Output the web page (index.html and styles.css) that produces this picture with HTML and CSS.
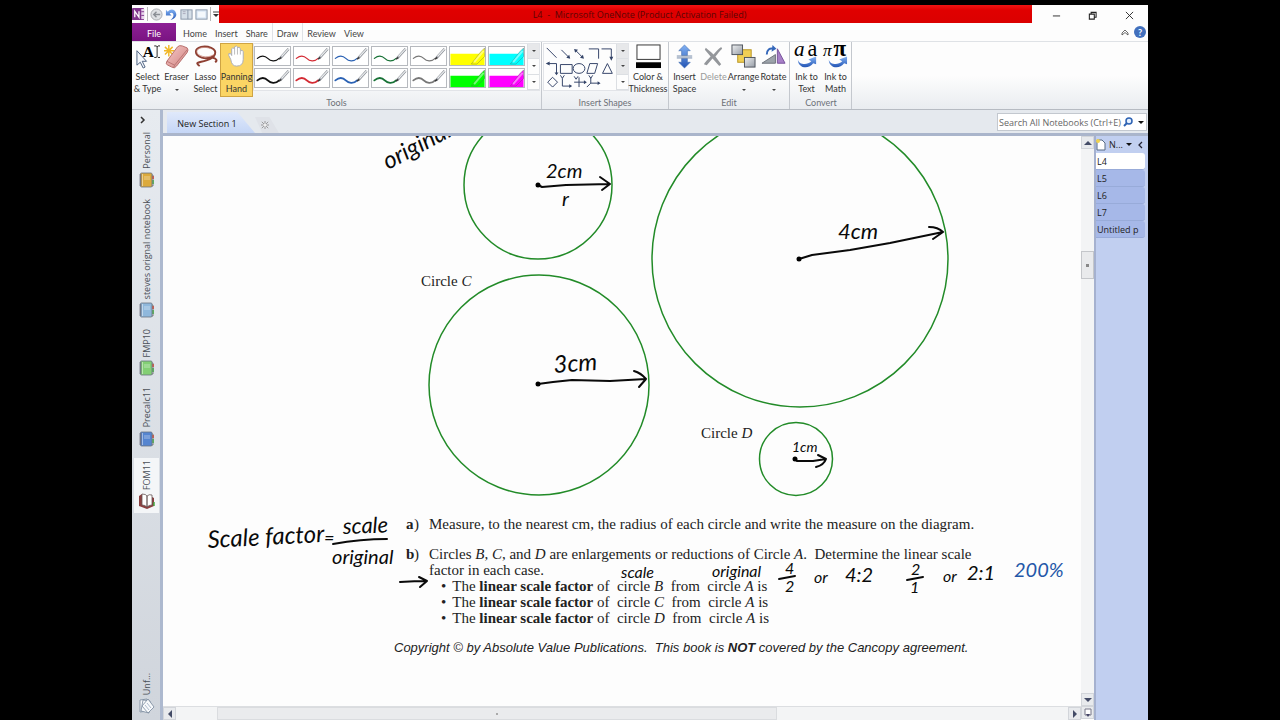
FILE: index.html
```html
<!DOCTYPE html>
<html lang="en">
<head>
<meta charset="utf-8">
<title>L4 - Microsoft OneNote (Product Activation Failed)</title>
<link rel="stylesheet" href="styles.css">
</head>
<body>
<svg class="defs" aria-hidden="true">
  <defs>
    <symbol id="pen" viewBox="0 0 36 19"><path d="M2 12C7 8 10 9 13 12S21 16 25 12" fill="none" stroke="currentColor" stroke-width="var(--w)" stroke-linecap="round"/><path d="M26 12L35 2" stroke="#8b8f96" stroke-width="2.6"/><path d="M27.500 10L35 2" stroke="#eceef0" stroke-width="1.300"/><path d="M25 13l2-2" stroke="#333" stroke-width="1.500"/></symbol>
    <symbol id="marker" viewBox="0 0 36 19"><path d="M0 7H36V19H0z" fill="currentColor"/><path d="M22 18L32 5 36 1V10L28 18z" fill="currentColor" stroke="#555" stroke-opacity=".35"/><path d="M25 16L35 4" stroke="#fff" stroke-opacity=".45" stroke-width="2"/></symbol>
    <symbol id="book" viewBox="0 0 16 16"><path d="M12 3h2v11h-2z" fill="#eee" stroke="#555" stroke-width=".7"/><path d="M14 4v3" stroke="#c43" stroke-width="1.500"/><path d="M14 8v4" stroke="#4a4" stroke-width="1.500"/><rect x="1.500" y="1" width="11.500" height="14" rx="1" fill="currentColor" stroke="#6b7380" stroke-width=".8"/><path d="M5 5h6M5 7h6M3.500 2v12" stroke="#fff" stroke-opacity=".45"/><path d="M0 3h3M0 5h3M0 7h3M0 9h3M0 11h3M0 13h3" stroke="#667" stroke-width=".7"/></symbol>
    <linearGradient id="blue" x2="0" y2="1"><stop stop-color="#82b2f3"/><stop offset="1" stop-color="#2455b5"/></linearGradient>
    <linearGradient id="pink" x2="1" y2="1"><stop stop-color="#f7cbc9"/><stop offset="1" stop-color="#cf817f"/></linearGradient>
    <linearGradient id="grey" x2="1" y2="1"><stop stop-color="#eef0f2"/><stop offset="1" stop-color="#969ca5"/></linearGradient>
  </defs>
</svg>

<div class="window">
  <header class="titlebar">
    <div class="quick">
      <svg class="applogo" viewBox="0 0 14 14" role="img" aria-label="OneNote"><rect width="13" height="13" rx="1" fill="#80348c"/><rect x="10" y="1" width="3" height="11" fill="#e7d4ea"/><path d="M3 10V3.500L7.500 10V3.500" fill="none" stroke="#fff" stroke-width="1.400"/><path d="M10 4h3M10 8h3" stroke="#80348c"/></svg>
      <i class="bar"></i>
      <button aria-label="Back"><svg viewBox="0 0 14 14"><circle cx="7" cy="7" r="6" fill="#dfe1e4" stroke="#a6a9ad"/><path d="M11 7H4M7 4L4 7l3 3" fill="none" stroke="#8b8f95" stroke-width="1.500"/></svg></button>
      <button aria-label="Undo"><svg viewBox="0 0 14 14"><path d="M1 2v6h6L5 6c2-2 5 0 4 3-.5 2-2 3-3 4 4-1 7-4 6-7C11 1 6 0 3 4z" fill="url(#blue)"/></svg></button>
      <button aria-label="Dock to desktop"><svg viewBox="0 0 14 14"><rect x="1" y="2" width="12" height="10" fill="#d6dfe8" stroke="#8694a6"/><rect x="8" y="2" width="1" height="10" fill="#8694a6"/><path d="M3 4h3M3 6h3" stroke="#aab"/></svg></button>
      <button aria-label="Full page view"><svg viewBox="0 0 14 14"><rect x="1" y="2" width="12" height="10" fill="#dbe7f5" stroke="#8694a6"/><rect x="3" y="4" width="8" height="6" fill="#f4f8fc"/></svg></button>
      <i class="bar"></i>
      <button class="small" aria-label="Customize toolbar"><svg viewBox="0 0 6 8"><path d="M0 2h6" stroke="#444"/><path d="M0 4h6L3 7z" fill="#333"/></svg></button>
    </div>
    <h1>L4 &nbsp;-&nbsp; Microsoft OneNote (Product Activation Failed)</h1>
    <div class="winbuttons">
      <button aria-label="Minimize"><svg viewBox="0 0 10 10"><path d="M1 5.500h8" stroke="#222"/></svg></button>
      <button aria-label="Restore"><svg viewBox="0 0 10 10"><path d="M1.500 3.500h5.500V9H1.500zM3.500 3V1.500H9V7H7.500" fill="none" stroke="#222" stroke-width="1.200"/></svg></button>
      <button aria-label="Close"><svg viewBox="0 0 10 10"><path d="M1 1l8 8M9 1L1 9" stroke="#222"/></svg></button>
    </div>
  </header>

  <nav class="tabs">
    <button class="file">File</button><button>Home</button><button>Insert</button><button>Share</button><button class="on">Draw</button><button>Review</button><button>View</button>
    <div class="help">
      <button aria-label="Collapse ribbon"><svg viewBox="0 0 8 8"><path d="M1 5l3-3 3 3v2L4 4.500 1 7z" fill="#fff" stroke="#444" stroke-width=".8"/></svg></button>
      <button class="q" aria-label="Help">?</button>
    </div>
  </nav>

  <section class="ribbon">
    <div class="group">
      <div class="tools">
        <button class="tool"><svg viewBox="0 0 26 26"><text x="8" y="13" class="serifA">A</text><path d="M20 2h2l1 1 1-1h2M23 3v10M20 14h2l1-1 1 1h2" fill="none" stroke="#222"/><path d="M2 7V22l3.500-3 3 6 2-1-3-6H12z" fill="#f5f8fd" stroke="#4b607f"/></svg><span>Select<br>&amp; Type</span></button>
        <button class="tool"><svg viewBox="0 0 26 26"><path d="M5 1v12M0 7h11M1 3l8 8M9 3l-8 8" stroke="#f0b728" stroke-width="1.500"/><path d="M3 18L14 3Q16 1 19 2L24 4Q26 6 24 9L13 23Q11 26 8 24L4 22Q1 21 3 18z" fill="url(#pink)" stroke="#b66d6b"/><path d="M3 18l8 4L24 6M11 22l-1 3" fill="none" stroke="#b97574"/></svg><span>Eraser<br><b class="dd"></b></span></button>
        <button class="tool"><svg viewBox="0 0 26 26"><path d="M22 12C13 18 3 13 3 8S12 1 19 4s5 10-5 13S2 19 7 23M20 14q7 2 3 5" fill="none" stroke="#8e3f32" stroke-width="2"/><path d="M22 11C14 16 4 12 4 8S12 2 19 5" fill="none" stroke="#c8877a" stroke-width=".8"/></svg><span>Lasso<br>Select</span></button>
        <button class="tool pressed"><svg viewBox="0 0 26 26"><path d="M7 16L5 12Q4 9 7 10l1 2V5q1-2 3 0V3q2-2 3 0v1q2-2 3 1v2q3-1 3 1v8q0 7-7 7-5 0-6-7z" fill="#fff" stroke="#a9adb8"/><path d="M11 5v6M14 4v7M17 7v4" stroke="#bbb"/></svg><span>Panning<br>Hand</span></button>
        <div class="gallery">
          <div class="pens">
            <button class="c-black"><svg><use href="#pen"/></svg></button><button class="c-red"><svg><use href="#pen"/></svg></button><button class="c-blue"><svg><use href="#pen"/></svg></button><button class="c-green"><svg><use href="#pen"/></svg></button><button class="c-grey"><svg><use href="#pen"/></svg></button><button class="c-yellow"><svg><use href="#marker"/></svg></button><button class="c-cyan"><svg><use href="#marker"/></svg></button>
            <button class="c-black thick"><svg><use href="#pen"/></svg></button><button class="c-red thick"><svg><use href="#pen"/></svg></button><button class="c-blue thick"><svg><use href="#pen"/></svg></button><button class="c-green thick"><svg><use href="#pen"/></svg></button><button class="c-grey thick"><svg><use href="#pen"/></svg></button><button class="c-lime"><svg><use href="#marker"/></svg></button><button class="c-magenta"><svg><use href="#marker"/></svg></button>
          </div>
          <div class="spin"><button class="off" aria-label="Up"><b class="dd"></b></button><button aria-label="Down"><b class="dd"></b></button><button aria-label="More"><b class="dd"></b></button></div>
        </div>
      </div>
      <h2>Tools</h2>
    </div>
    <div class="group">
      <div class="tools">
        <div class="gallery shapes">
          <svg viewBox="0 0 72 47" role="img" aria-label="Shapes"><g fill="none" stroke="#344468"><path d="M2 4l10 10M17 6l8 8M31 6l8 8M45 5h10v10M58 5h10v10M4 20h8v10M16 21h12v9H16z"/><ellipse cx="35" cy="25" rx="6" ry="5"/><path d="M46 20h8l-3 10h-8zM64 20l-5 10h10zM8 34l5 5-5 5-5-5zM18 35v8h8M16 32l2 3 2-3M30 39h11M35 34v10M30 33l2 3 2-3M47 34v6h8M47 40l-4 4M45 32l2 3 2-3"/></g><path d="M26 15l-4-1 3-3zM40 15l-4-1 3-3zM30 5l4 1-3 3zM68 17l-2-4h4zM1 20l4-2v4zM12 32l-2-3h4zM28 43l-3-2v4zM43 39l-3-2v4zM57 40l-3-2v4z" fill="#344468"/></svg>
          <div class="spin"><button class="off" aria-label="Up"><b class="dd"></b></button><button class="off" aria-label="Down"><b class="dd"></b></button><button aria-label="More"><b class="dd"></b></button></div>
        </div>
        <button class="tool wide"><svg viewBox="0 0 26 26"><rect x="1" y="1" width="24" height="15" fill="#fff" stroke="#333"/><path d="M0 19h26v6H0z"/></svg><span>Color &amp;<br>Thickness</span></button>
      </div>
      <h2>Insert Shapes</h2>
    </div>
    <div class="group">
      <div class="tools">
        <button class="tool"><svg viewBox="0 0 26 26"><path d="M13 1l6 6h-3v5h-6V7H7zM13 25l6-6h-3v-4h-6v4H7z" fill="url(#blue)" stroke="#3c69ae" stroke-width=".6"/><path d="M5 12.500h16M5 14.500h16" stroke="#7288a8"/></svg><span>Insert<br>Space</span></button>
        <button class="tool disabled"><svg viewBox="0 0 26 26"><path d="M5 4c3 3 5 4 8 7 3-4 5-6 8-8l1 2c-4 4-5 6-7 8l6 8-2 2-7-8-6 7-3-1c3-4 4-5 7-8L4 6z" fill="#94979b"/></svg><span>Delete<br>&nbsp;</span></button>
        <button class="tool arrange"><svg viewBox="0 0 26 26"><rect x="7" y="6" width="14" height="13" fill="#f0cf55" stroke="#b99524"/><rect x="1" y="1" width="11" height="10" fill="url(#grey)" stroke="#4f555e"/><rect x="14" y="14" width="11" height="10" fill="url(#grey)" stroke="#4f555e"/></svg><span>Arrange<br><b class="dd"></b></span></button>
        <button class="tool"><svg viewBox="0 0 26 26"><path d="M1 20L15 11v9z" fill="#9ca3aa" stroke="#6d737b"/><path d="M17 5l8 15h-8z" fill="#a77fc7" stroke="#76509a"/><path d="M6 11C6 6 9 4 13 5" fill="none" stroke="#3467ba" stroke-width="2"/><path d="M12 1l4 4-5 3z" fill="#3467ba"/></svg><span>Rotate<br><b class="dd"></b></span></button>
      </div>
      <h2>Edit</h2>
    </div>
    <div class="group convert">
      <div class="tools">
        <button class="tool"><svg viewBox="0 0 26 26"><text x="0" y="12" class="ink-a">a</text><text x="14" y="12" class="plain-a">a</text><path d="M4 16c1 5 9 7 14 2l-3-2 8-3v8l-3-1C15 27 4 25 4 16z" fill="url(#blue)"/></svg><span>Ink to<br>Text</span></button>
        <button class="tool"><svg viewBox="0 0 26 26"><text x="0" y="12" class="ink-pi">π</text><text x="11" y="12" class="plain-pi">π</text><path d="M6 16c1 5 9 7 14 2l-3-2 8-3v8l-3-1C17 27 6 25 6 16z" fill="url(#blue)"/></svg><span>Ink to<br>Math</span></button>
      </div>
      <h2>Convert</h2>
    </div>
  </section>

  <main class="body">
    <aside class="notebooks">
      <button class="expand" aria-label="Expand"><svg viewBox="0 0 6 8"><path d="M1 1l3 3-3 3" fill="none" stroke="#333" stroke-width="1.500"/></svg></button>
      <button class="nb c-gold"><span>Personal</span><svg><use href="#book"/></svg></button>
      <button class="nb c-sky"><span>steves orignal notebook</span><svg><use href="#book"/></svg></button>
      <button class="nb c-leaf"><span>FMP10</span><svg><use href="#book"/></svg></button>
      <button class="nb c-royal"><span>Precalc11</span><svg><use href="#book"/></svg></button>
      <button class="nb current"><span>FOM11</span><svg viewBox="0 0 16 16"><path d="M0 3l3-2v10l5 2 5-2V4l2 1v8l-7 3-8-3z" fill="#8a3f3f"/><path d="M3 1q4 0 5 2v11q-2-2-5-2zM8 3q2-2 5-1v10q-3 0-5 2z" fill="#fff" stroke="#655" stroke-width=".8"/><path d="M15 9v4" stroke="#4a4" stroke-width="1.500"/></svg></button>
      <button class="nb unfiled"><span>Unf...</span><svg viewBox="0 0 16 16"><g fill="#f7f9fb" stroke="#76879b" stroke-width=".8"><path d="M1 2l7-1 1 12-8 1z"/><path d="M4 2l7 1-1 12-8-2z"/><path d="M9 1l6 8-6 6-6-7z"/></g><path d="M8 5l4 5M6 7l4 5" stroke="#9aabc0" stroke-width=".8"/></svg></button>
    </aside>

    <div class="workspace">
      <div class="sections">
        <button class="section">New Section 1</button>
        <button class="newsection" aria-label="Create new section"><svg viewBox="0 0 10 10"><path d="M5 0v10M0 5h10M1 1l8 8M9 1L1 9" stroke="#888"/><circle cx="5" cy="5" r="2" fill="#eee"/></svg></button>
        <label class="search"><input type="text" aria-label="Search notebooks" placeholder="Search All Notebooks (Ctrl+E)"><svg class="lens" viewBox="0 0 10 10"><circle cx="6" cy="4" r="3" fill="#e5f1ff" stroke="#2d62b3" stroke-width="1.500"/><path d="M4 6L1 9" stroke="#2d62b3" stroke-width="2"/></svg><i class="tri"></i></label>
      </div>
      <div class="content">
        <div class="canvas">
          <article class="page">
            <svg class="circles" viewBox="163 136 918 380" role="img" aria-label="Circles with labelled radii">
              <g fill="none" stroke="#228b28" stroke-width="1.500"><circle cx="538" cy="185" r="74"/><circle cx="539" cy="385" r="110"/><circle cx="800" cy="259" r="148"/><circle cx="796" cy="459" r="36.500"/></g>
              <text x="421" y="286">Circle <tspan class="it">C</tspan></text>
              <text x="701" y="438">Circle <tspan class="it">D</tspan></text>
            </svg>
            <div class="q-row"><b>a</b>)<p>Measure, to the nearest cm, the radius of each circle and write the measure on the diagram.</p></div>
            <div class="q-row"><b>b</b>)<div><p>Circles <i>B</i>, <i>C</i>, and <i>D</i> are enlargements or reductions of Circle <i>A</i>.&nbsp; Determine the linear scale<br>factor in each case.</p>
              <ul>
                <li>The <b>linear scale factor</b> of &nbsp;circle <i>B</i>&nbsp; from &nbsp;circle <i>A</i> is</li>
                <li>The <b>linear scale factor</b> of &nbsp;circle <i>C</i>&nbsp; from &nbsp;circle <i>A</i> is</li>
                <li>The <b>linear scale factor</b> of &nbsp;circle <i>D</i>&nbsp; from &nbsp;circle <i>A</i> is</li>
              </ul></div></div>
            <footer>Copyright © by Absolute Value Publications.&nbsp; This book is <b>NOT</b> covered by the Cancopy agreement.</footer>
            <svg class="ink" viewBox="163 136 918 570">
              <g class="strokes">
                <path d="M538 185L542 187 566 185 610 184M600 177L610 184 602 190"/>
                <path d="M538 384L553 382 572 380 610 381 646 379M634 371Q641 373 646 379L639 387"/>
                <path d="M799 259L812 255 850 250 890 243 943 232M929 227Q938 227 943 232L933 239"/>
                <path d="M795 459L797 461 813 461 826 459M818 455L826 459Q824 465 816 467"/>
                <path d="M333 544Q361 539 387 539M400 582Q415 581 427 581M419 577L427 581 420 587"/>
                <path d="M779 579L795 576M907 580L923 577"/>
              </g>
              <g><circle cx="538" cy="185" r="2.500"/><circle cx="538" cy="384" r="2.500"/><circle cx="799" cy="259" r="2.500"/><circle cx="795" cy="459" r="2.500"/></g>
              <g class="hand">
                <text class="h24" transform="rotate(-28 388 170)" x="388" y="170">original</text>
                <text class="h20" x="546" y="178">2cm</text><text class="h20" x="562" y="206">r</text>
                <text class="h24" transform="rotate(-4 554 373)" x="554" y="373">3cm</text>
                <text class="h22" x="838" y="239">4cm</text>
                <text class="h14" x="792" y="452">1cm</text>
                <text class="h24" transform="rotate(-3 208 548)" x="208" y="548">Scale factor</text><text class="h18" x="324" y="544">=</text>
                <text class="h22" transform="rotate(-2 343 534)" x="343" y="534">scale</text>
                <text class="h20" x="332" y="564">original</text>
                <text class="h16" x="621" y="578">scale</text><text class="h16" x="712" y="577">original</text>
                <text class="h16" x="785" y="574">4</text><text class="h16" x="785" y="592">2</text>
                <text class="h16" x="814" y="583">or</text><text class="h20" x="845" y="582">4:2</text>
                <text class="h16" x="911" y="575">2</text><text class="h16" x="910" y="593">1</text>
                <text class="h16" x="943" y="582">or</text><text class="h20" x="967" y="580">2:1</text>
                <text class="h20 bluepen" x="1014" y="577">200%</text>
              </g>
            </svg>
          </article>
          <div class="vscroll"><button aria-label="Scroll up"><svg viewBox="0 0 8 8"><path d="M0 6l4-4 4 4z"/></svg></button><i class="thumb"></i><button aria-label="Scroll down"><svg viewBox="0 0 8 8"><path d="M0 2h8L4 6z"/></svg></button></div>
          <div class="hscroll"><button aria-label="Scroll left"><svg viewBox="0 0 8 8"><path d="M6 0v8L2 4z"/></svg></button><i class="thumb"></i><button aria-label="Scroll right"><svg viewBox="0 0 8 8"><path d="M2 0v8l4-4z"/></svg></button></div>
          <button class="corner" aria-label="Add space"><svg viewBox="0 0 10 10"><path d="M2 1h6v6H2z" fill="#fff" stroke="#778"/><path d="M3 6h4L5 9z" fill="#446"/></svg></button>
        </div>
        <aside class="pages">
          <div class="pagehead"><svg viewBox="0 0 10 12"><path d="M1 1h5l3 3v7H1z" fill="#fff" stroke="#566b85"/><circle cx="2" cy="2" r="2" fill="#f1d34c"/></svg><span>N...</span><i class="tri"></i><button aria-label="Collapse"><svg viewBox="0 0 6 8"><path d="M4 1L1 4l3 3" fill="none" stroke="#223" stroke-width="1.300"/></svg></button></div>
          <button class="active">L4</button><button>L5</button><button>L6</button><button>L7</button><button>Untitled p</button>
        </aside>
      </div>
    </div>
  </main>
</div>
</body>
</html>
```
FILE: styles.css
```css
* { box-sizing: border-box; }
body { margin: 0; background: #000; font-family: "Open Sans", "Noto Sans", sans-serif; font-size: 9px; color: #333; }
.defs { position: absolute; width: 0; height: 0; }
button { font: inherit; color: inherit; background: none; border: 0; padding: 0; margin: 0; display: flex; align-items: center; justify-content: center; }
svg { display: block; }
h1, h2, p, ul { margin: 0; padding: 0; font-weight: 400; }
.window { height: 100vh; margin: 0 132px; padding-top: 5px; display: flex; flex-direction: column; overflow: hidden; }

.titlebar { display: flex; height: 18px; background: #fdfdfd; flex: none; }
.quick { width: 87px; display: flex; align-items: center; gap: 2px; }
.quick svg { width: 13px; height: 13px; }
.quick .bar { width: 1px; height: 14px; background: #b8b8b8; }
.quick .small svg { width: 6px; height: 8px; }
.titlebar h1 { flex: 1; background: linear-gradient(#f01414, #e00000 30%, #db0000); color: #5c0505; font-size: 9px; line-height: 19px; text-align: center; padding-left: 28px; }
.winbuttons { width: 116px; display: flex; justify-content: space-around; padding: 2px 0 0 6px; }
.winbuttons svg { width: 9px; height: 9px; }

.tabs { display: flex; height: 19px; background: #fdfdfd; border-bottom: 1px solid #dfe2e6; flex: none; color: #444; font-family: Lato, sans-serif; }
.tabs > button { padding: 2px 4px 0; }
.tabs .file { width: 44px; background: linear-gradient(#8d2095, #7a1482); color: #fff; margin-right: 3px; }
.tabs .on { border: 1px solid #dfe2e6; border-width: 0 1px; }
.help { margin-left: auto; display: flex; gap: 5px; align-items: center; padding-right: 2px; }
.help svg { width: 8px; height: 8px; }
.q { width: 12px; height: 12px; border-radius: 50%; background: #4270bd; color: #fff; font-weight: 700; }

.ribbon { display: flex; height: 68px; flex: none; background: linear-gradient(#fdfdfd 50%, #e9ecf0); border-bottom: 1px solid #b6bbc2; font-family: Lato, sans-serif; }
.group { border-right: 1px solid #c4c8ce; display: flex; flex-direction: column; justify-content: space-between; padding: 1px 1px 0 1px; }
.group h2 { text-align: center; color: #6d7178; line-height: 12px; font-size: 9px; }
.convert { padding: 1px 1px 0 2px; }
.tools { display: flex; }
.tool { width: 29px; height: 54px; flex-direction: column; justify-content: flex-start; line-height: 12px; border: 1px solid transparent; white-space: nowrap; }
.tool svg { width: 25px; height: 25px; margin-bottom: 2px; flex: none; overflow: visible; }
.tool.pressed { width: 33px; background: #fbd564; border-color: #cfa443; }
.tool.wide { width: 38px; }
.tool.arrange { width: 31px; }
.tool.disabled { color: #9a9a9a; }
.dd { display: inline-block; vertical-align: middle; border: 2px solid transparent; border-top-color: #444; border-bottom: 0; }
.gallery { display: flex; height: 48px; border: 1px solid #e2e4e8; background: #fdfdfd; }
.pens { display: grid; grid-template-columns: repeat(7, 37px); gap: 2px; padding: 2px 2px 2px 0; }
.pens button { --w: 1.3; border: 1px solid #b6b9be; background: #fff; height: 20px; }
.pens svg { width: 35px; height: 18px; }
.pens .thick { --w: 2; }
.c-black { color: #111; } .c-red { color: #d42a33; } .c-blue { color: #2b62b4; } .c-green { color: #187236; } .c-grey { color: #777; }
.c-yellow { color: #ff0; } .c-cyan { color: #0ff; } .c-lime { color: #0f0; } .c-magenta { color: #f0f; }
.spin { display: flex; flex-direction: column; width: 12px; border-left: 1px solid #dcdfe3; }
.spin button { flex: 1; border-bottom: 1px solid #dcdfe3; }
.spin .off { background: #e7e8ea; }
.shapes > svg { width: 72px; height: 46px; }
.serifA { font: 700 16px "Liberation Serif", serif; }
.ink-a { font: italic 22px "Liberation Serif", serif; } .plain-a { font: 23px "Liberation Serif", serif; }
.ink-pi { font: italic 18px "Liberation Serif", serif; } .plain-pi { font: 700 24px "Liberation Serif", serif; }

.body { flex: 1; display: flex; min-height: 0; background: #e5e9ee; }
.notebooks { width: 31px; flex: none; display: flex; flex-direction: column; padding: 4px 2px 6px 2px; background: linear-gradient(#e7ebf0, #d0d5dc); border-right: 3px solid #adb9cf; }
.expand { height: 12px; width: 18px; margin-bottom: 6px; }
.expand svg { width: 6px; height: 8px; }
.nb { flex-direction: column; gap: 3px; width: 25px; margin-bottom: 11px; padding-left: 1px; }
.nb span { writing-mode: vertical-rl; transform: rotate(180deg); line-height: 12px; color: #4a4f57; }
.nb svg { width: 16px; height: 16px; }
.c-gold svg { color: #dcaa3c; } .c-sky svg { color: #8fb8dc; } .c-leaf svg { color: #83cf74; } .c-royal svg { color: #5585d0; }
.current { background: #f4f6f8; padding-top: 2px; padding-bottom: 4px; }
.unfiled { margin-top: auto; margin-bottom: 0; }

.workspace { flex: 1; min-width: 0; display: flex; flex-direction: column; }
.sections { display: flex; height: 26px; padding: 2px 1px 0 4px; border-bottom: 3px solid #aab5cb; flex: none; }
.section { width: 88px; height: 21px; padding: 2px 12px 0 4px; color: #222; background: linear-gradient(#e0e9fb, #c5d6f6); clip-path: polygon(0 0, 80% 0, 100% 100%, 0 100%); white-space: nowrap; }
.newsection { width: 24px; height: 16px; margin-top: 5px; background: #dfe2e8; clip-path: polygon(0 0, 60% 0, 100% 100%, 30% 100%); padding-right: 4px; }
.newsection svg { width: 8px; height: 8px; }
.search { margin-left: auto; display: flex; align-items: center; width: 150px; height: 18px; margin-top: 1px; background: #fff; border: 1px solid #c3c8cf; padding-right: 2px; }
.search input { flex: 1; min-width: 0; border: 0; padding: 0 0 0 1px; font: inherit; background: none; color: #555; }
.search input::placeholder { color: #666; opacity: 1; }
.lens { width: 10px; height: 10px; margin-right: 5px; }
.tri { border: 3px solid transparent; border-top-color: #111; border-bottom: 0; }

.content { flex: 1; display: flex; min-height: 0; }
.canvas { flex: 1; min-width: 0; display: grid; grid-template: 1fr 14px / 1fr 13px; background: #fdfdfd; }
.page { position: relative; overflow: hidden; min-width: 0; color: #222; font: 15px/16px "Liberation Serif", serif; }
.circles { width: 918px; height: 380px; }
.circles text { font: 15px "Liberation Serif", serif; fill: #222; }
.circles .it { font-style: italic; }
.q-row { display: flex; padding-left: 243px; margin-bottom: 14px; white-space: nowrap; }
.q-row > b { width: 8px; }
.q-row > p, .q-row > div { margin-left: 10px; }
.q-row ul { list-style: none; }
.q-row li { padding-left: 12px; }
.q-row li::before { content: "•"; padding-right: 6px; }
.page footer { padding-left: 231px; font: italic 13px/16px "Liberation Sans", sans-serif; white-space: nowrap; }
.ink { position: absolute; left: 0; top: 0; width: 918px; height: 570px; pointer-events: none; }
.strokes { fill: none; stroke: #0a0a0a; stroke-width: 2; stroke-linecap: round; stroke-linejoin: round; }
.hand { font-family: Lato, sans-serif; font-style: italic; fill: #0a0a0a; }
.h14 { font-size: 14px; } .h16 { font-size: 16px; } .h18 { font-size: 18px; } .h20 { font-size: 20px; } .h22 { font-size: 22px; } .h24 { font-size: 24px; }
.bluepen { fill: #2457a8; }

.vscroll, .hscroll { display: flex; background: #f3f4f5; }
.vscroll { flex-direction: column; justify-content: space-between; }
.vscroll button, .hscroll button, .corner { width: 13px; height: 13px; background: #e8eaed; border: 1px solid #d2d5da; }
.vscroll svg, .hscroll svg { width: 8px; height: 8px; fill: #434b66; }
.vscroll .thumb { height: 28px; background: #e9eaec; border: 1px solid #c4c6ca; margin-bottom: auto; margin-top: 102px; display: grid; place-items: center; }
.vscroll .thumb::after { content: ""; width: 3px; height: 3px; background: #888; }
.hscroll { border-top: 1px solid #dcdee1; }
.hscroll .thumb { width: 61%; margin: 0 auto 0 41px; background: #eaebed; border: 1px solid #dadcdf; display: grid; place-items: center; }
.hscroll .thumb::after { content: ""; width: 2px; height: 2px; background: #aaa; }
.corner svg { width: 10px; height: 10px; }
.pages { width: 54px; flex: none; padding-right: 3px; background: #c1cff0; border-left: 2px solid #a5b1cf; color: #222; }
.pagehead { display: flex; align-items: center; height: 17px; gap: 3px; }
.pagehead > svg { width: 10px; height: 12px; }
.pagehead button svg { width: 6px; height: 8px; }
.pagehead .tri { margin-right: 3px; }
.pages > button { width: 100%; height: 17px; justify-content: flex-start; padding-left: 1px; background: #a6b8e8; border-bottom: 1px solid #98abd9; border-radius: 0 3px 3px 0; white-space: nowrap; }
.pages > .active { background: #fff; }
```
